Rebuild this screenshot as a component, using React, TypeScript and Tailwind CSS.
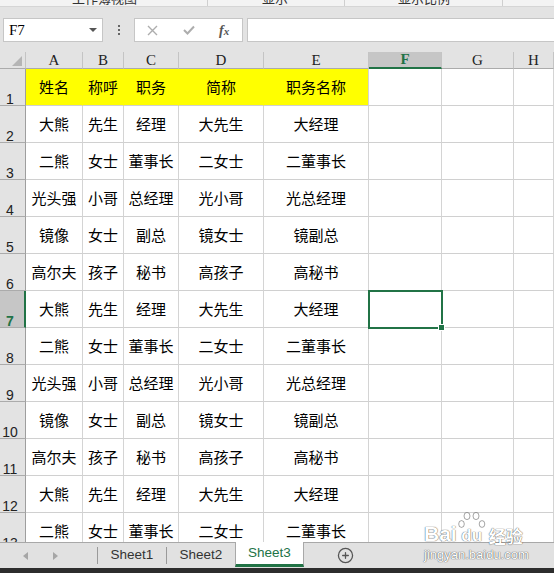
import { CirclePlus } from "lucide-react";

const COLS = ["A", "B", "C", "D", "E", "F", "G", "H"];

const BASE_ROWS: string[][] = [
  ["大熊", "先生", "经理", "大先生", "大经理"],
  ["二熊", "女士", "董事长", "二女士", "二董事长"],
  ["光头强", "小哥", "总经理", "光小哥", "光总经理"],
  ["镜像", "女士", "副总", "镜女士", "镜副总"],
  ["高尔夫", "孩子", "秘书", "高孩子", "高秘书"],
];

const HEADER = ["姓名", "称呼", "职务", "简称", "职务名称"];

const ROWS: string[][] = [
  HEADER,
  ...BASE_ROWS,
  ...BASE_ROWS,
  BASE_ROWS[0],
  BASE_ROWS[1],
];

const cjk = "font-['SimSun','Noto_Sans_CJK_SC',sans-serif]";
const serifish = "font-['Liberation_Serif','Times_New_Roman',serif]";

function ColumnHeader({ label }: { label: string }) {
  const active = label === "F";
  return (
    <div
      className={
        active
          ? `flex h-[17px] items-center justify-center border-r border-b-2 border-r-[#c4c4c4] border-b-[#217346] bg-[#c6c6c6] text-[15px] font-bold text-[#217346] ${serifish}`
          : `flex h-[17px] items-center justify-center border-r border-b border-r-[#c4c4c4] border-b-[#ababab] bg-[#e3e3e3] text-[15px] text-[#222] ${serifish}`
      }
    >
      {label}
    </div>
  );
}

function RowHeader({ n }: { n: number }) {
  const active = n === 7;
  return (
    <div
      className={
        active
          ? "flex h-[37px] items-end justify-center border-r-2 border-b border-r-[#217346] border-b-[#ababab] bg-[#c6c6c6] pr-[4px] font-['Liberation_Sans',Arial,sans-serif] text-[14px] leading-none font-bold text-[#217346]"
          : "flex h-[37px] items-end justify-center border-r border-b border-r-[#9e9e9e] border-b-[#ababab] bg-[#e3e3e3] pr-[5px] font-['Liberation_Sans',Arial,sans-serif] text-[14px] leading-none text-[#222]"
      }
    >
      <span className="-mb-[1px]">{n}</span>
    </div>
  );
}

function Cell({ row, col, text }: { row: number; col: number; text: string }) {
  const yellow = row === 1 && col < 5;
  const selected = row === 7 && col === 5;
  let cls = `relative flex h-[37px] items-center justify-center border-r border-b border-b-[#d0d0d0] text-[15px] text-black ${cjk}`;
  cls += yellow ? " bg-[#ffff00]" : " bg-white";
  cls += yellow && col < 4 ? " border-r-[#ffff00]" : " border-r-[#d4d4d4]";
  return (
    <div className={cls}>
      {text}
      {selected ? (
        <div className="absolute -top-[1px] -left-[1px] z-10 h-[39px] w-[75px] border-2 border-[#217346]">
          <div className="absolute -right-[4px] -bottom-[4px] h-[7px] w-[7px] border border-white bg-[#217346]" />
        </div>
      ) : null}
    </div>
  );
}

function Watermark() {
  return (
    <div className="pointer-events-none absolute top-[512px] left-[424px] z-20 flex flex-col items-start text-white [text-shadow:0_0_1px_rgba(0,0,0,0.55),0_0_1px_rgba(0,0,0,0.55)]">
      <div className="flex items-end font-['Liberation_Sans',Arial,sans-serif] text-[21px] leading-none font-bold">
        <span>Bai</span>
        <span className="relative flex h-[32px] w-[30px] items-end justify-center">
          <svg className="absolute top-0 left-[1px]" width="28" height="20" viewBox="0 0 28 20">
            <g fill="#ffffff" stroke="rgba(0,0,0,0.35)" strokeWidth="1">
              <ellipse cx="9" cy="4" rx="3" ry="3.6" />
              <ellipse cx="18" cy="4" rx="3" ry="3.6" />
              <ellipse cx="3.5" cy="12" rx="2.8" ry="3.4" />
              <ellipse cx="24" cy="12" rx="2.8" ry="3.4" />
            </g>
          </svg>
          <span className="relative text-[17px]">du</span>
        </span>
        <span className={`ml-[2px] text-[17px] font-bold ${cjk}`}>经验</span>
      </div>
      <div className="mt-[4px] font-['Liberation_Sans',Arial,sans-serif] text-[13px] leading-none">
        jingyan.baidu.com
      </div>
    </div>
  );
}

export default function App() {
  return (
    <div className="relative flex h-[573px] w-[554px] flex-col overflow-hidden bg-white">
      {/* ribbon remnant */}
      <div className="relative h-[7px] overflow-hidden border-b border-[#d5d5d5] bg-[#f3f3f3]">
        <div className={`absolute -top-[10px] left-[72px] text-[13px] leading-[16px] text-[#333] ${cjk}`}>工作簿视图</div>
        <div className="absolute top-0 left-[207px] h-[6px] w-px bg-[#cfcfcf]" />
        <div className={`absolute -top-[10px] left-[262px] text-[13px] leading-[16px] text-[#333] ${cjk}`}>显示</div>
        <div className="absolute top-0 left-[344px] h-[6px] w-px bg-[#cfcfcf]" />
        <div className={`absolute -top-[10px] left-[398px] text-[13px] leading-[16px] text-[#333] ${cjk}`}>显示比例</div>
        <div className="absolute top-0 left-[502px] h-[6px] w-px bg-[#cfcfcf]" />
      </div>

      {/* formula bar */}
      <div className="h-[45px] bg-[#e3e3e3] pt-[11px]">
        <div className="flex h-[24px] items-stretch">
          <div className="ml-[3px] flex w-[100px] items-center justify-between border border-[#c6c6c6] bg-white pr-[5px] pl-[5px]">
            <span className={`text-[15px] text-black ${serifish}`}>F7</span>
            <svg width="8" height="4" viewBox="0 0 8 4">
              <polygon points="0,0 8,0 4,4" fill="#555" />
            </svg>
          </div>
          <div className="flex w-[31px] flex-col items-center justify-center gap-[2px]">
            <span className="h-[2px] w-[2px] bg-[#666]" />
            <span className="h-[2px] w-[2px] bg-[#666]" />
            <span className="h-[2px] w-[2px] bg-[#666]" />
          </div>
          <div className="flex w-[109px] items-center border border-[#c6c6c6] bg-white">
            <div className="flex w-[36px] justify-center">
              <svg width="11" height="11" viewBox="0 0 11 11">
                <path d="M1 1 L10 10 M10 1 L1 10" stroke="#adadad" strokeWidth="1.4" />
              </svg>
            </div>
            <div className="flex w-[36px] justify-center">
              <svg width="12" height="10" viewBox="0 0 12 10">
                <path d="M1 5 L4.5 8.5 L11 1.5" stroke="#adadad" strokeWidth="2" fill="none" />
              </svg>
            </div>
            <div className={`flex w-[36px] items-baseline justify-center text-[14px] font-bold text-[#555] italic ${serifish}`}>
              f<span className="text-[11px]">x</span>
            </div>
          </div>
          <div className="-mr-[1px] ml-[4px] flex-1 border border-[#c6c6c6] bg-white" />
        </div>
      </div>

      {/* grid */}
      <div className="min-h-0 flex-1 overflow-hidden">
        <div className="grid grid-cols-[26px_57px_41px_55px_85px_105px_73px_72px_40px]">
          <div className="relative h-[17px] border-r border-b border-r-[#c4c4c4] border-b-[#ababab] bg-[#e3e3e3]">
            <svg className="absolute right-[3px] bottom-[2px]" width="10" height="10" viewBox="0 0 10 10">
              <polygon points="10,0 10,10 0,10" fill="#b5b5b5" />
            </svg>
          </div>
          {COLS.map((c) => (
            <ColumnHeader key={c} label={c} />
          ))}
          {ROWS.map((row, ri) => {
            const n = ri + 1;
            return [
              <RowHeader key={`h${n}`} n={n} />,
              ...COLS.map((c, ci) => <Cell key={`${c}${n}`} row={n} col={ci} text={row[ci] ?? ""} />),
            ];
          })}
        </div>
      </div>

      {/* sheet tabs */}
      <div className="flex h-[26px] border-t border-[#a8a8a8] bg-[#e1e1e1] font-['Liberation_Sans',Arial,sans-serif] text-[13.5px] text-[#333]">
        <div className="flex w-[97px] items-center">
          <svg className="ml-[23px]" width="5" height="8" viewBox="0 0 5 8">
            <polygon points="5,0 5,8 0,4" fill="#a6a6a6" />
          </svg>
          <svg className="ml-[25px]" width="5" height="8" viewBox="0 0 5 8">
            <polygon points="0,0 0,8 5,4" fill="#a6a6a6" />
          </svg>
        </div>
        <div className="my-[4px] w-px bg-[#9a9a9a]" />
        <div className="flex w-[68px] items-center justify-center">Sheet1</div>
        <div className="my-[4px] w-px bg-[#9a9a9a]" />
        <div className="flex w-[68px] items-center justify-center">Sheet2</div>
        <div className="-mt-px mb-[1px] flex w-[69px] items-center justify-center border-x border-b-[3px] border-x-[#a8a8a8] border-b-[#217346] bg-white text-[#217346]">
          Sheet3
        </div>
        <div className="flex w-[82px] items-center justify-center">
          <CirclePlus size={17} strokeWidth={1.8} color="#555" />
        </div>
      </div>
      <div className="h-[5px] bg-[#2d2d2d]" />

      <Watermark />
    </div>
  );
}
